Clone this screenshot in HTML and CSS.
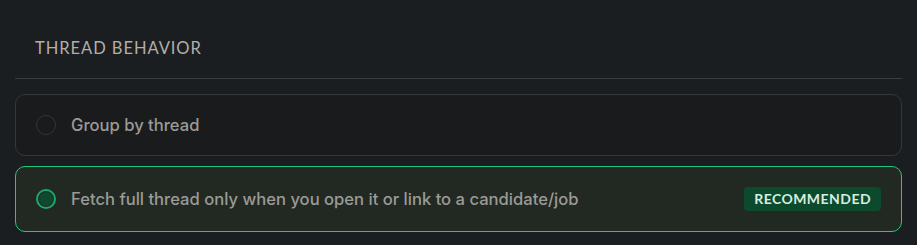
FILE: index.html
```html
<!DOCTYPE html>
<html>
<head>
<meta charset="utf-8">
<link rel="stylesheet" href="styles.css">
</head>
<body>
<div class="page">
  <section class="section">
    <h2 class="section-title">THREAD BEHAVIOR</h2>
    <div class="options">
      <label class="option">
        <span class="radio"></span>
        <span class="option-label">Group by thread</span>
      </label>
      <label class="option selected">
        <span class="radio"><span class="dot"></span></span>
        <span class="option-label">Fetch full thread only when you open it or link to a candidate/job</span>
        <span class="badge">RECOMMENDED</span>
      </label>
    </div>
  </section>
</div>
</body>
</html>
```
FILE: styles.css
```css
* { box-sizing: border-box; }
html, body {
  margin: 0;
  background: #1b1e20;
  height: 100%;
}
.page {
  padding: 0 15px 0 15px;
  font-family: Inter, "Noto Sans", sans-serif;
}
.section-title {
  margin: 0;
  padding: 38px 0 20px 20px;
  font-family: Lato, sans-serif;
  font-weight: 400;
  font-size: 16.5px;
  letter-spacing: 0.95px;
  line-height: 20px;
  color: #b3afa8;
  border-bottom: 1px solid #393d3f;
}
.options {
  display: flex;
  flex-direction: column;
  gap: 10px;
  padding-top: 15px;
}
.option {
  display: flex;
  align-items: center;
  gap: 15px;
  padding: 20px 20px;
  border: 1px solid #35383a;
  border-radius: 10px;
  background: #191b1d;
}
.option.selected {
  border-color: #21c97f;
  background: #222923;
}
.radio {
  width: 20px;
  height: 20px;
  border-radius: 50%;
  border: 1.5px solid #323638;
  display: flex;
  align-items: center;
  justify-content: center;
  flex: none;
}
.selected .radio {
  border: 2px solid #1fa86b;
}
.dot {
  width: 14px;
  height: 14px;
  border-radius: 50%;
  background: #0f4a30;
}
.option-label {
  flex: 1;
  font-size: 16.6px;
  font-weight: 500;
  line-height: 20px;
  color: #9c9a96;
}
.badge {
  flex: none;
  height: 24px;
  line-height: 24px;
  padding: 0 10px;
  border-radius: 4px;
  background: #0b4a2c;
  color: #d8ebdf;
  font-family: Lato, sans-serif;
  font-weight: 700;
  font-size: 14px;
  letter-spacing: 0.45px;
}
```
